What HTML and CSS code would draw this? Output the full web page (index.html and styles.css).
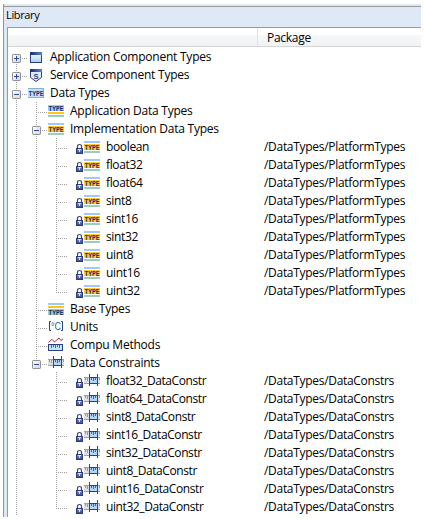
FILE: index.html
```
<!DOCTYPE html>
<html lang="en">
<head>
<meta charset="utf-8">
<title>Library</title>
<link rel="stylesheet" href="styles.css">
</head>
<body>
<svg class="defs" aria-hidden="true">
  <defs>
    <linearGradient id="blue" x2="0" y2="1"><stop offset="0" stop-color="#fff"/><stop offset="1" stop-color="#a9cdf0"/></linearGradient>
    <linearGradient id="btn" x2="1" y2="1"><stop offset="0" stop-color="#fff"/><stop offset="1" stop-color="#d4d4d4"/></linearGradient>
    <linearGradient id="bar" x2="1"><stop offset="0" stop-color="#142b6e"/><stop offset="1" stop-color="#5c86c4"/></linearGradient>
    <linearGradient id="lockfill" x2="0" y2="1"><stop offset="0" stop-color="#8093c8"/><stop offset="1" stop-color="#35488c"/></linearGradient>
  </defs>
  <symbol id="line" viewBox="0 0 20 18"><path class="dots" d="M8.5 0V18"/></symbol>
  <symbol id="tee" viewBox="0 0 20 18"><path class="dots" d="M8.5 0V18M10 10.5H19"/></symbol>
  <symbol id="end" viewBox="0 0 20 18"><path class="dots" d="M8.5 0V11M10 10.5H19"/></symbol>
  <symbol id="box" viewBox="0 0 20 18"><rect x="4.5" y="6.5" width="8" height="8" rx=".7" fill="url(#btn)" stroke="#919191"/><path d="M6 10.5H11" stroke="#2c4b9c"/><path class="dots" d="M14 10.5H19"/></symbol>
  <symbol id="minus" viewBox="0 0 20 18"><path class="dots" d="M8.5 0V18"/><use href="#box" width="20" height="18"/></symbol>
  <symbol id="minus-end" viewBox="0 0 20 18"><path class="dots" d="M8.5 0V6"/><use href="#box" width="20" height="18"/></symbol>
  <symbol id="plus" viewBox="0 0 20 18"><path class="dots" d="M8.5 0V18"/><use href="#box" width="20" height="18"/><path d="M8.5 8V13" stroke="#2c4b9c"/></symbol>
  <symbol id="plus-first" viewBox="0 0 20 18"><path class="dots" d="M8.5 16V18"/><use href="#box" width="20" height="18"/><path d="M8.5 8V13" stroke="#2c4b9c"/></symbol>

  <symbol id="window" viewBox="0 0 16 18"><rect x="2.500" y="4.500" width="11" height="10" fill="url(#blue)" stroke="#29427f"/><rect x="2" y="4" width="12" height="3" fill="url(#bar)"/></symbol>
  <symbol id="service" viewBox="0 0 16 18"><path d="M2.500 3.500H13.500V11.500L8 15.500L2.500 11.500Z" fill="#dceafa" stroke="#29427f"/><rect x="2" y="3" width="12" height="3" fill="url(#bar)"/></symbol>
  <symbol id="type" viewBox="0 0 16 18"><rect y="5" width="16" height="8" fill="#c5dff6"/><path d="M0 4.500H16M0 13.500H16M15.500 5V13" stroke="#83b1dc"/></symbol>
  <symbol id="type-app" viewBox="0 0 16 18"><rect y="3" width="16" height="6" fill="#9dcafa"/><rect y="10" width="16" height="2" fill="#ffc90e"/><rect y="13" width="16" height="2" fill="#9fceb8"/></symbol>
  <symbol id="type-impl" viewBox="0 0 16 18"><rect y="3" width="16" height="2" fill="#9dcafa"/><rect y="6" width="16" height="6" fill="#ffc928"/><rect y="13" width="16" height="2" fill="#9fceb8"/></symbol>
  <symbol id="type-base" viewBox="0 0 16 18"><rect y="3" width="16" height="2" fill="#9dcafa"/><rect y="6" width="16" height="2" fill="#ffc90e"/><rect y="9" width="16" height="6" fill="#9fceb8"/></symbol>
  <symbol id="units" viewBox="0 0 16 18"><path d="M3 3.500H1.500V12.500H3M13 3.500H14.500V12.500H13" fill="none" stroke="#29427f"/></symbol>
  <symbol id="compu" viewBox="0 0 16 18"><path d="M.5 6.500L4 3.300L6.500 6L11 2L13 4.500L15 3" fill="none" stroke="#b82350"/><rect x=".5" y="8.500" width="14" height="6" fill="#c5e2fb" stroke="#29427f"/><path d="M3.500 9V12M5.500 9V11M7.500 9V12M9.500 9V11M11.500 9V12" stroke="#3269b5"/></symbol>
  <symbol id="constr" viewBox="0 0 16 18"><rect y="6" width="16" height="5" fill="#dedede"/><path d="M0 5.500H16M0 11.500H16" stroke="#a0a0a0"/><path d="M1.500 6V8M3.500 6V9M15.500 6V8" stroke="#999"/><rect x="6" y="6" width="7" height="5" fill="#afd5fb"/><path d="M6 5.500H13M6 11.500H13" stroke="#29427f"/><path d="M7.500 6V8M9.500 6V9M11.500 6V8" stroke="#3269b5"/><path d="M5.500 2V14M13.500 2V14" stroke="#b5103a"/></symbol>
  <symbol id="lock" viewBox="0 0 8 18"><path d="M1.500 10V8.500Q1.500 6.500 3.500 6.500T5.500 8.500V10" fill="none" stroke="#414963" stroke-width="1.200"/><rect x=".5" y="10.500" width="6" height="5" fill="url(#lockfill)" stroke="#2b3b7c"/><path d="M2 11.500H5M3.500 11V14" stroke="#dce3f6"/></symbol>
</svg>

<main class="view">
  <h1 class="title">Library</h1>
  <div class="tree">
    <div class="head"><span class="col"></span><span class="col">Package</span></div>
    <ul class="rows" id="rows"></ul>
  </div>
</main>
<script src="tree.js"></script>
</body>
</html>
```
FILE: tree.js
```
// Text drawn on top of an icon's shapes.
const typeText = y => `<text x=".5" y="${y}" textLength="15" lengthAdjust="spacingAndGlyphs" class="glyph-type">TYPE</text>`;
const glyphs = {
  service: '<text x="8" y="13" class="glyph-s">S</text>',
  type: typeText(11.5),
  'type-app': typeText(8.5),
  'type-impl': typeText(11.5),
  'type-base': typeText(14.5),
  units: '<text x="3" y="12" textLength="10" lengthAdjust="spacingAndGlyphs" class="glyph-unit">°C</text>'
};

// guides, icon, name, package
const rows = [
  [['plus-first'], 'window', 'Application Component Types'],
  [['plus'], 'service', 'Service Component Types'],
  [['minus'], 'type', 'Data Types'],
  [['line', 'tee'], 'type-app', 'Application Data Types'],
  [['line', 'minus'], 'type-impl', 'Implementation Data Types'],
  ...leaves(['boolean', 'float32', 'float64', 'sint8', 'sint16', 'sint32', 'uint8', 'uint16', 'uint32'],
    'line', 'type-impl', '', '/DataTypes/PlatformTypes'),
  [['line', 'tee'], 'type-base', 'Base Types'],
  [['line', 'tee'], 'units', 'Units'],
  [['line', 'tee'], 'compu', 'Compu Methods'],
  [['line', 'minus-end'], 'constr', 'Data Constraints'],
  ...leaves(['float32', 'float64', 'sint8', 'sint16', 'sint32', 'uint8', 'uint16', 'uint32'],
    '', 'constr', '_DataConstr', '/DataTypes/DataConstrs')
];

function leaves(names, parent, icon, suffix, pkg) {
  return names.map((n, i) => [['line', parent, i === names.length - 1 ? 'end' : 'tee'], icon, n + suffix, pkg]);
}

const svg = (cls, id) => `<svg class="${cls}">${id ? `<use href="#${id}"/>` : ''}${glyphs[id] || ''}</svg>`;

document.getElementById('rows').innerHTML = rows.map(([guides, icon, name, pkg]) =>
  `<li class="row${pkg ? ' leaf' : ''}">${guides.map(g => svg('guide', g)).join('')}` +
  `${pkg ? svg('lock', 'lock') : ''}${svg('icon', icon)}` +
  `<span class="name${name.includes('_') ? ' tight' : ''}">${name}</span>${pkg ? `<span class="pkg">${pkg}</span>` : ''}</li>`
).join('');
```
FILE: styles.css
```
* { box-sizing: border-box; }
body {
  margin: 0;
  background: #fff;
  color: #000;
  font: 12px/18px "Open Sans", "Noto Sans", sans-serif;
  overflow: hidden;
}
.defs { position: absolute; width: 0; height: 0; }
.view {
  width: 418px;
  height: 513px;
  margin: 4px 0 0 3px;
  padding-top: 2px;
  border-left: 1px solid #8296ba;
  background: #dfe9f5;
}
.title {
  height: 21px;
  margin: 0;
  padding-left: 2px;
  border-top: 1px solid #999;
  font-size: 11px;
  font-weight: 400;
  line-height: 16px;
  letter-spacing: -0.35px;
}
.tree {
  height: 490px;
  margin-left: 3px;
  border-top: 1px solid #969ba3;
  border-left: 1px solid #969ba3;
  background: #fff;
}
.head {
  display: flex;
  height: 19px;
  border-bottom: 1px solid #d5d5d5;
  background: linear-gradient(#fff 0 7px, #f7f8fa 7px, #f1f2f4 100%);
}
.head .col:first-child { width: 250px; border-right: 1px solid #dfe0e2; }
.head .col + .col { padding-left: 9px; line-height: 20px; letter-spacing: -0.28px; }
.rows { margin: 0; padding: 1px 0 0; list-style: none; }
.row { display: flex; height: 18px; white-space: pre; }
.guide { flex: none; width: 20px; height: 18px; }
.icon { flex: none; width: 16px; height: 18px; margin-right: 6px; }
.lock { flex: none; width: 8px; height: 18px; margin-left: 8px; }
.name { letter-spacing: -0.23px; }
.leaf .name { width: 158px; letter-spacing: -0.35px; }
.leaf .name.tight { letter-spacing: -0.41px; }
.pkg { letter-spacing: -0.3px; }
.dots { fill: none; stroke: #a0a0a0; stroke-width: 1; stroke-dasharray: 1 1; }
.glyph-type { font: 700 6.5px "Liberation Mono", monospace; fill: #1c2f70; }
.glyph-s { font: 700 7.5px "Liberation Sans", sans-serif; fill: #29427f; text-anchor: middle; }
.glyph-unit { font: 400 10px "Liberation Sans", sans-serif; fill: #1f5fa6; }
```
